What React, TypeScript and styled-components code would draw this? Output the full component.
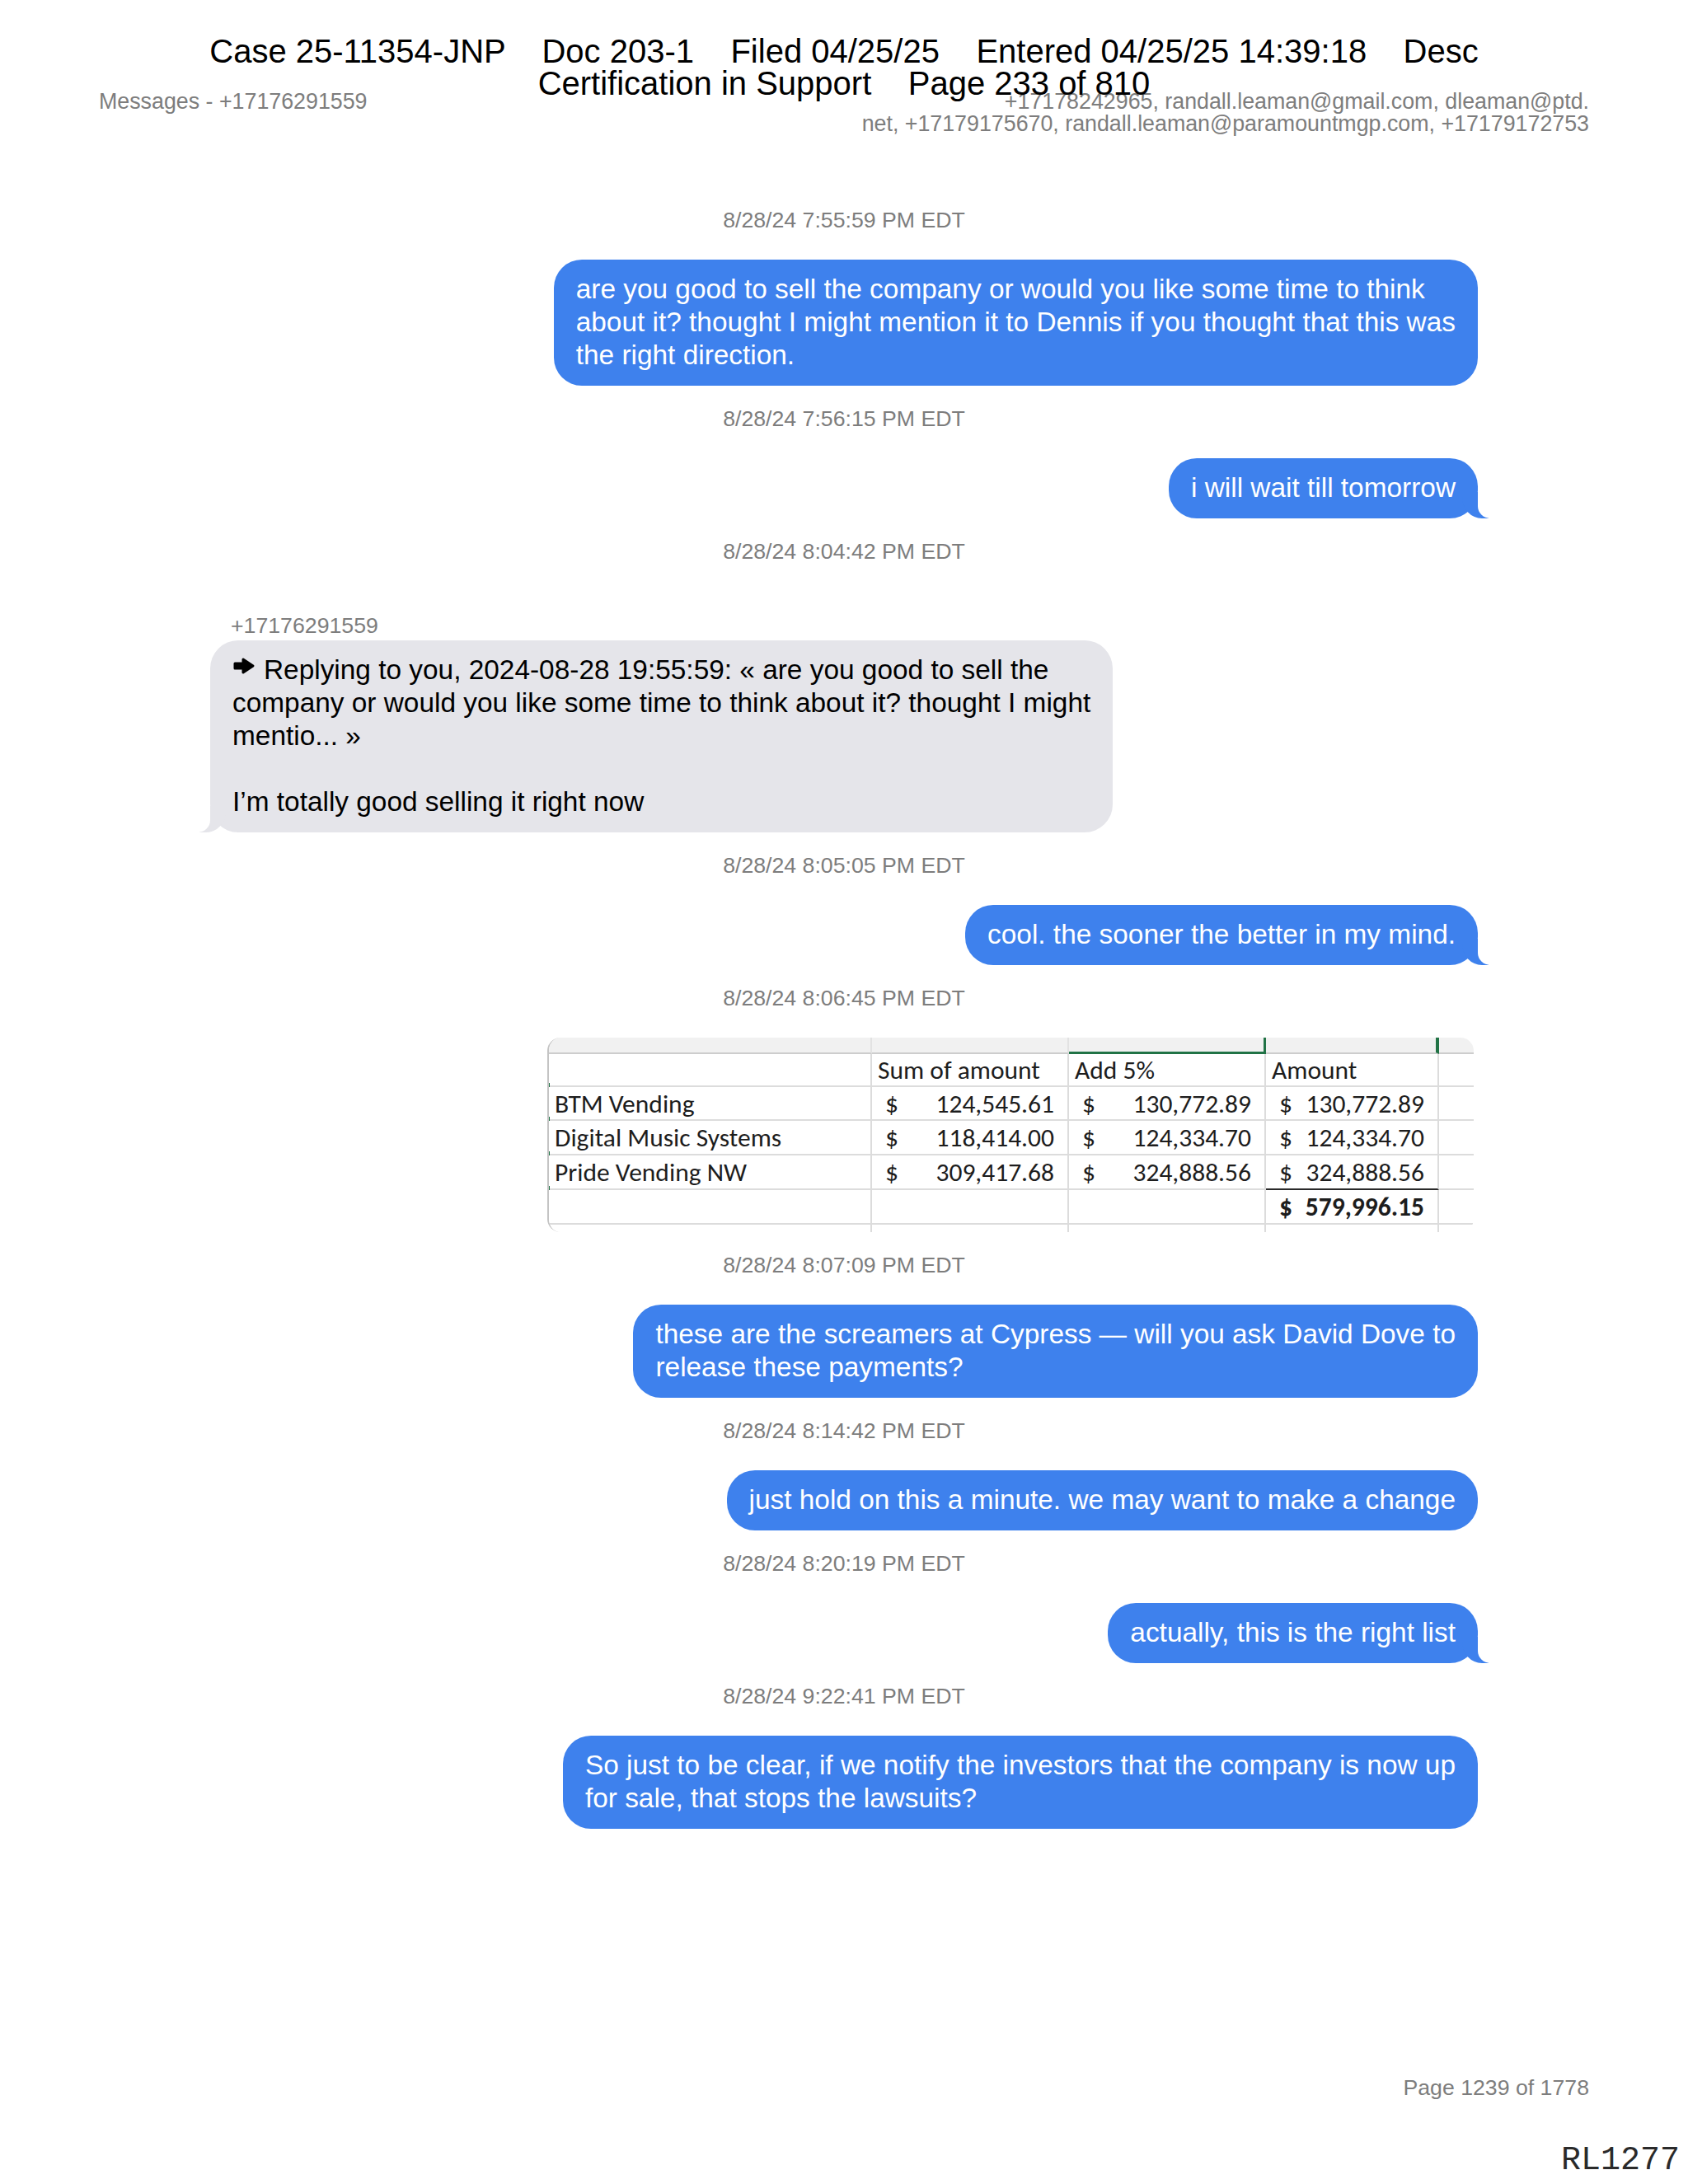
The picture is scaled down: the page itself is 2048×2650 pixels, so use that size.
import React from "react";
import styled, { createGlobalStyle, css } from "styled-components";

const BLUE = "#3e81ed";
const GRAY = "#e5e5ea";
const META = "#7d7d7d";
const GREEN = "#217346";

const GlobalStyle = createGlobalStyle`
  html, body { margin: 0; padding: 0; background: #ffffff; }
  body { font-family: "Liberation Sans", Arial, sans-serif; }
`;

const Page = styled.div`
  position: relative;
  width: 2048px;
  min-height: 2650px;
  display: flex;
  flex-direction: column;
  background: #ffffff;
  font-family: "Liberation Sans", Arial, sans-serif;
`;

const CourtStamp = styled.div`
  position: absolute;
  top: 43px;
  left: 0;
  right: 0;
  text-align: center;
  font-size: 40px;
  line-height: 39px;
  color: #000;
  white-space: pre;
  z-index: 5;
  pointer-events: none;
`;

const MetaRow = styled.header`
  display: flex;
  justify-content: space-between;
  align-items: flex-start;
  padding: 110px 120px 0;
  font-size: 26.8px;
  line-height: 27px;
  color: ${META};
`;

const MetaRight = styled.div`
  text-align: right;
`;

const MetaLine = styled.div``;

const Chat = styled.main`
  width: 1538px;
  margin: 0 auto;
  padding-top: 63px;
  display: flex;
  flex-direction: column;
`;

const Timestamp = styled.div`
  align-self: center;
  margin: 26px 0 34px;
  font-size: 26.7px;
  line-height: 28px;
  color: ${META};
`;

const SenderLabel = styled.div`
  margin: 28px 0 4px;
  padding-left: 25px;
  font-size: 26.7px;
  line-height: 28px;
  color: ${META};
`;

const tailRight = css`
  &::before {
    content: "";
    position: absolute;
    bottom: 0;
    right: -13px;
    width: 32px;
    height: 32px;
    background: ${BLUE};
    border-bottom-left-radius: 24px 26px;
  }
  &::after {
    content: "";
    position: absolute;
    bottom: 0;
    right: -17px;
    width: 17px;
    height: 34px;
    background: #fff;
    border-bottom-left-radius: 15px;
  }
`;

const tailLeft = css`
  &::before {
    content: "";
    position: absolute;
    bottom: 0;
    left: -13px;
    width: 32px;
    height: 32px;
    background: ${GRAY};
    border-bottom-right-radius: 24px 26px;
  }
  &::after {
    content: "";
    position: absolute;
    bottom: 0;
    left: -17px;
    width: 17px;
    height: 34px;
    background: #fff;
    border-bottom-right-radius: 15px;
  }
`;

const Bubble = styled.div<{ $fromMe: boolean; $tail?: boolean }>`
  position: relative;
  box-sizing: border-box;
  max-width: 1140px;
  padding: 16px 27px 17px;
  border-radius: 34px;
  font-size: 33.4px;
  line-height: 40px;
  white-space: pre-wrap;
  align-self: ${(p) => (p.$fromMe ? "flex-end" : "flex-start")};
  background: ${(p) => (p.$fromMe ? BLUE : GRAY)};
  color: ${(p) => (p.$fromMe ? "#ffffff" : "#000000")};
  ${(p) => (p.$tail ? (p.$fromMe ? tailRight : tailLeft) : "")}
`;

const ReplyArrow = styled.svg`
  width: 28px;
  height: 22px;
  margin-right: 10px;
  vertical-align: 5px;
`;

/* ---------- spreadsheet picture ---------- */

const Sheet = styled.div`
  align-self: flex-end;
  margin-right: 5px;
  box-sizing: border-box;
  width: 1124px;
  height: 236px;
  border-radius: 16px;
  overflow: hidden;
  display: grid;
  grid-template-columns: 392px 239px 239px 210px 1fr;
  grid-template-rows: 20px 40px 41px 42px 42px 42px 1fr;
  border-left: 2px solid #c4c4c4;
  background: #ffffff;
  font-family: Carlito, Lato, "Open Sans", sans-serif;
  font-size: 31.5px;
  color: #1d1d1d;
`;

type CellProps = {
  $strip?: boolean;
  $noBottom?: boolean;
  $noRight?: boolean;
  $underline?: boolean;
  $greenBottom?: boolean;
  $greenRight?: number;
  $tick?: boolean;
  $bold?: boolean;
  $money?: boolean;
};

const Cell = styled.div<CellProps>`
  position: relative;
  box-sizing: border-box;
  display: flex;
  align-items: center;
  justify-content: ${(p) => (p.$money ? "space-between" : "flex-start")};
  padding: ${(p) => (p.$money ? "0 16px 0 16px" : "0 0 0 7px")};
  white-space: pre;
  font-weight: ${(p) => (p.$bold ? 700 : 400)};
  background: ${(p) => (p.$strip ? "#f1f1f1" : "#ffffff")};
  border-right: ${(p) =>
    p.$greenRight
      ? `${p.$greenRight}px solid ${GREEN}`
      : p.$noRight
      ? "none"
      : p.$strip
      ? "2px solid #e2e2e2"
      : "2px solid #dcdcdc"};
  border-bottom: ${(p) =>
    p.$noBottom
      ? "none"
      : p.$greenBottom
      ? `3px solid ${GREEN}`
      : p.$underline
      ? "2px solid #2a2a2a"
      : p.$strip
      ? "2px solid #cdcdcd"
      : "2px solid #dcdcdc"};
  ${(p) =>
    p.$tick
      ? css`
          &::before {
            content: "";
            position: absolute;
            left: -2px;
            bottom: -5px;
            width: 3px;
            height: 8px;
            background: ${GREEN};
          }
        `
      : ""}
`;

const Money: React.FC<{ value: string; bold?: boolean; underline?: boolean }> = ({
  value,
  bold,
  underline,
}) => (
  <Cell $money $bold={bold} $underline={underline}>
    <span>$</span>
    <span>{value}</span>
  </Cell>
);

const rows = [
  { name: "BTM Vending", a: "124,545.61", b: "130,772.89", c: "130,772.89" },
  { name: "Digital Music Systems", a: "118,414.00", b: "124,334.70", c: "124,334.70" },
  { name: "Pride Vending NW", a: "309,417.68", b: "324,888.56", c: "324,888.56" },
];

const Spreadsheet: React.FC = () => (
  <Sheet>
    <Cell $strip />
    <Cell $strip />
    <Cell $strip $greenBottom $greenRight={3} />
    <Cell $strip $greenRight={4} />
    <Cell $strip $noRight />

    <Cell $tick />
    <Cell>Sum of amount</Cell>
    <Cell>Add 5%</Cell>
    <Cell>Amount</Cell>
    <Cell $noRight />

    {rows.map((r, i) => (
      <React.Fragment key={r.name}>
        <Cell $tick>{r.name}</Cell>
        <Money value={r.a} />
        <Money value={r.b} />
        <Money value={r.c} underline={i === rows.length - 1} />
        <Cell $noRight />
      </React.Fragment>
    ))}

    <Cell />
    <Cell />
    <Cell />
    <Money value="579,996.15" bold />
    <Cell $noRight />

    <Cell $noBottom />
    <Cell $noBottom />
    <Cell $noBottom />
    <Cell $noBottom />
    <Cell $noBottom $noRight />
  </Sheet>
);

/* ---------- footer ---------- */

const Footer = styled.footer`
  margin-top: auto;
  display: flex;
  flex-direction: column;
  align-items: flex-end;
`;

const PageNumber = styled.div`
  padding-right: 120px;
  font-size: 26.7px;
  line-height: 28px;
  color: ${META};
`;

const Bates = styled.div`
  margin-top: 55px;
  margin-bottom: 8px;
  padding-right: 10px;
  font-family: "Liberation Mono", "Courier New", monospace;
  font-size: 40px;
  line-height: 40px;
  color: #2a2a2a;
`;

type Msg =
  | { ts: string; kind: "me"; text: string; tail?: boolean }
  | { ts: string; kind: "sheet" }
  | { ts: string; kind: "reply" };

const messages: Msg[] = [
  {
    ts: "8/28/24 7:55:59 PM EDT",
    kind: "me",
    text:
      "are you good to sell the company or would you like some time to think\nabout it? thought I might mention it to Dennis if you thought that this was\nthe right direction.",
  },
  { ts: "8/28/24 7:56:15 PM EDT", kind: "me", text: "i will wait till tomorrow", tail: true },
  { ts: "8/28/24 8:04:42 PM EDT", kind: "reply" },
  { ts: "8/28/24 8:05:05 PM EDT", kind: "me", text: "cool. the sooner the better in my mind.", tail: true },
  { ts: "8/28/24 8:06:45 PM EDT", kind: "sheet" },
  {
    ts: "8/28/24 8:07:09 PM EDT",
    kind: "me",
    text: "these are the screamers at Cypress \u2014 will you ask David Dove to\nrelease these payments?",
  },
  {
    ts: "8/28/24 8:14:42 PM EDT",
    kind: "me",
    text: "just hold on this a minute. we may want to make a change",
  },
  { ts: "8/28/24 8:20:19 PM EDT", kind: "me", text: "actually, this is the right list", tail: true },
  {
    ts: "8/28/24 9:22:41 PM EDT",
    kind: "me",
    text:
      "So just to be clear, if we notify the investors that the company is now up\nfor sale, that stops the lawsuits?",
  },
];

const ReplyBubble: React.FC = () => (
  <>
    <SenderLabel>+17176291559</SenderLabel>
    <Bubble $fromMe={false} $tail>
      <ReplyArrow viewBox="0 0 28 22" aria-hidden>
        <path
          d="M3 8 H13 V3 L25 11 L13 19 V14 H3 Z"
          fill="#000"
          stroke="#000"
          strokeWidth="3"
          strokeLinejoin="round"
        />
      </ReplyArrow>
      {"Replying to you, 2024-08-28 19:55:59: \u00ab are you good to sell the\ncompany or would you like some time to think about it? thought I might\nmentio... \u00bb\n\nI\u2019m totally good selling it right now"}
    </Bubble>
  </>
);

export default function App() {
  return (
    <>
      <GlobalStyle />
      <Page>
        <CourtStamp>
          {"Case 25-11354-JNP    Doc 203-1    Filed 04/25/25    Entered 04/25/25 14:39:18    Desc\nCertification in Support    Page 233 of 810"}
        </CourtStamp>
        <MetaRow>
          <div>Messages - +17176291559</div>
          <MetaRight>
            <MetaLine>+17178242965, randall.leaman@gmail.com, dleaman@ptd.</MetaLine>
            <MetaLine>net, +17179175670, randall.leaman@paramountmgp.com, +17179172753</MetaLine>
          </MetaRight>
        </MetaRow>
        <Chat>
          {messages.map((m) => (
            <React.Fragment key={m.ts}>
              <Timestamp>{m.ts}</Timestamp>
              {m.kind === "me" && (
                <Bubble $fromMe $tail={m.tail}>
                  {m.text}
                </Bubble>
              )}
              {m.kind === "reply" && <ReplyBubble />}
              {m.kind === "sheet" && <Spreadsheet />}
            </React.Fragment>
          ))}
        </Chat>
        <Footer>
          <PageNumber>Page 1239 of 1778</PageNumber>
          <Bates>RL1277</Bates>
        </Footer>
      </Page>
    </>
  );
}
